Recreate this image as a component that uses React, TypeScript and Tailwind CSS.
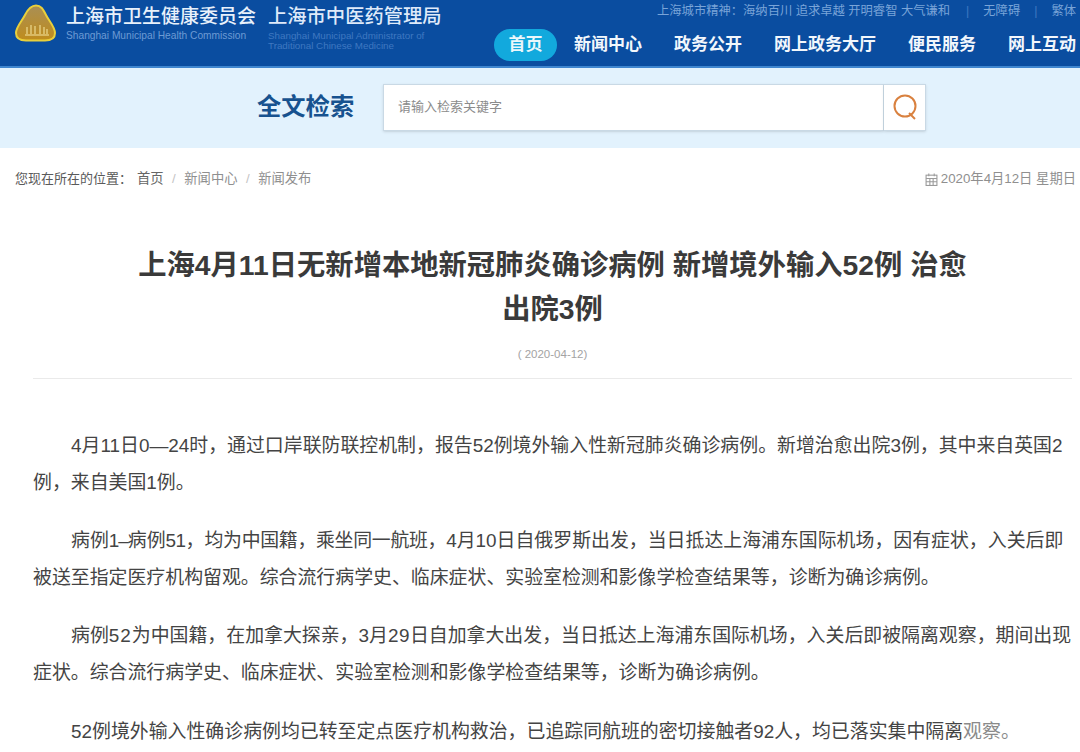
import React from "react";

const cjk = { fontFamily: '"Liberation Sans","Noto Sans CJK SC",sans-serif' };

function Logo() {
  return (
    <svg width="44" height="42" viewBox="0 0 44 42" className="shrink-0">
      <defs>
        <linearGradient id="g" x1="0" y1="0" x2="0" y2="1">
          <stop offset="0" stopColor="#a98f55" />
          <stop offset="1" stopColor="#c08c1c" />
        </linearGradient>
      </defs>
      <path d="M22 3.5C27 3.5 29 7 32 13C35 19 41 25 41 31C41 37 37 38.500 31 38.500L12 38.500C6 38.500 2 37 2 31C2 25 8 19 11 13C14 7 17 3.500 22 3.500Z" fill="url(#g)" stroke="#e8cf3c" strokeWidth="2" />
      <g stroke="#ecd98f" strokeWidth="1.200" fill="none">
        <path d="M13 32V25M17 32V23M21 32V24M26 32V23M30 32V25M33 32V27" />
        <path d="M11 33H35" />
      </g>
    </svg>
  );
}

function Nav({ children, active }: { children: string; active?: boolean }) {
  return (
    <span className={active ? "flex h-[32px] w-[63px] items-center justify-center rounded-[16px] bg-[#12a9dd] text-[17px] font-bold text-[#eaf7fb]" : "text-[17px] font-bold text-[#f2f7fc]"}>
      {children}
    </span>
  );
}

function Para({ children }: { children: React.ReactNode }) {
  return <p className="mb-[22.200px] indent-[38px] text-[18.900px] leading-[36.500px] text-[#444]">{children}</p>;
}

export default function App() {
  return (
    <div className="h-[752px] w-[1080px] overflow-hidden bg-white" style={cjk}>
      <header className="flex h-[68px] border-b-2 border-[#3f86cf] bg-[#0a4da0]">
        <div className="flex pl-[14px] pt-[2px]">
          <Logo />
          <div className="ml-[8px] pt-[5px]">
            <div className="whitespace-nowrap text-[19px] font-medium leading-[20px] text-[#e8f1fb]">上海市卫生健康委员会</div>
            <div className="mt-[4px] whitespace-nowrap text-[10.200px] leading-[10px] text-[#6d9bd4]">Shanghai Municipal Health Commission</div>
          </div>
          <div className="ml-[12px] pt-[5px]">
            <div className="whitespace-nowrap text-[19.300px] font-medium leading-[20px] text-[#dfeafa]">上海市中医药管理局</div>
            <div className="mt-[4px] w-[185px] text-[9.800px] leading-[10px] text-[#3f78c0]">Shanghai Municipal Administrator of Traditional Chinese Medicine</div>
          </div>
        </div>
        <div className="flex flex-1 flex-col items-end">
          <div className="flex h-[22px] items-center gap-[14px] pr-[4px] text-[12.300px] text-[#79a4d8]">
            <span className="mr-[2px] whitespace-nowrap">上海城市精神：海纳百川 追求卓越 开明睿智 大气谦和</span>
            <span className="text-[#3f78c0]">|</span>
            <span className="whitespace-nowrap">无障碍</span>
            <span className="text-[#3f78c0]">|</span>
            <span className="whitespace-nowrap">繁体</span>
          </div>
          <nav className="flex items-center gap-[32px] pr-[4px] pt-[7px]">
            <span className="-mr-[15px]"><Nav active>首页</Nav></span>
            <Nav>新闻中心</Nav>
            <Nav>政务公开</Nav>
            <Nav>网上政务大厅</Nav>
            <Nav>便民服务</Nav>
            <Nav>网上互动</Nav>
          </nav>
        </div>
      </header>

      <section className="flex h-[80px] items-center bg-[#e2f2fd] pb-[2px] pl-[257px]">
        <h2 className="w-[126px] text-[24.300px] font-bold text-[#17528f]">全文检索</h2>
        <div className="flex h-[47px] w-[501px] items-center border border-[#c9d9e5] bg-white pl-[14px] text-[13px] text-[#8b8b8b] shadow-sm">请输入检索关键字</div>
        <div className="flex h-[47px] w-[42px] items-center justify-center border border-l-0 border-[#c9d9e5] bg-white shadow-sm">
          <svg width="28" height="28" viewBox="0 0 28 28" fill="none" stroke="#d9813f" strokeWidth="2">
            <circle cx="14" cy="13" r="10.500" />
            <path d="M18 20L24 26" />
          </svg>
        </div>
      </section>

      <div className="flex items-center justify-between pl-[15px] pr-[4px] pt-[21px] text-[13.300px] leading-[20px] text-[#8f8f8f]">
        <div className="flex items-center">
          <span className="text-[13px] text-[#5a5a5a]">您现在所在的位置：</span>
          <span className="ml-[5px] text-[#666]">首页</span>
          <span className="mx-[8.500px] text-[#c4c4c4]">/</span>
          <span>新闻中心</span>
          <span className="mx-[8.500px] text-[#c4c4c4]">/</span>
          <span>新闻发布</span>
        </div>
        <div className="flex items-center gap-[3px]">
          <svg width="13" height="13" viewBox="0 0 12 12" fill="none" stroke="#9a9a9a" strokeWidth="1">
            <rect x="1" y="2" width="10" height="9.500" />
            <path d="M1 5H11M3.500 .5V3M8.500 .5V3M4.500 5V11.500M7.500 5V11.500M1 8H11" />
          </svg>
          <span>2020年4月12日 星期日</span>
        </div>
      </div>

      <main className="w-[1072px] pl-[33px]">
        <h1 className="mx-auto mt-[55px] w-[860px] text-center text-[28.300px] font-bold leading-[43.500px] text-[#3a3a3a]">
          上海4月11日无新增本地新冠肺炎确诊病例 新增境外输入52例 治愈<br />出院3例
        </h1>
        <div className="mt-[15px] border-b border-[#eaeaea] pb-[16px] text-center text-[11.500px] leading-[16px] text-[#a3a3a3]">( 2020-04-12)</div>
        <article className="mt-[49px]">
          <Para>4月11日0—24时，通过口岸联防联控机制，报告52例境外输入性新冠肺炎确诊病例。新增治愈出院3例，其中来自英国2例，来自美国1例。</Para>
          <Para>病例<span className="tracking-[-1px]">1–</span>病例<span className="tracking-[-0.500px]">51</span>，<span className="tracking-[-0.300px]">均为中国籍，乘坐同一航班，</span>4月10日自俄罗斯出发，当日抵达上海浦东国际机场，因有症状，入关后即被送至指定医疗机构留观。综合流行病学史、临床症状、实验室检测和影像学检查结果等，诊断为确诊病例。</Para>
          <Para>病例<span className="tracking-[1px]">52</span>为中国籍，在加拿大探亲，3月<span className="tracking-[0.500px]">29</span>日自加拿大出发，当日抵达上海浦东国际机场，入关后即被隔离观察，期间出现症状。综合流行病学史、临床症状、实验室检测和影像学检查结果等，诊断为确诊病例。</Para>
          <Para>52例境外输入性确诊病例均已转至定点医疗机构救治，已追踪同航班的密切接触者92人，均已落实集中隔离<span className="text-[#8a8a8a]">观察。</span></Para>
        </article>
      </main>
    </div>
  );
}
